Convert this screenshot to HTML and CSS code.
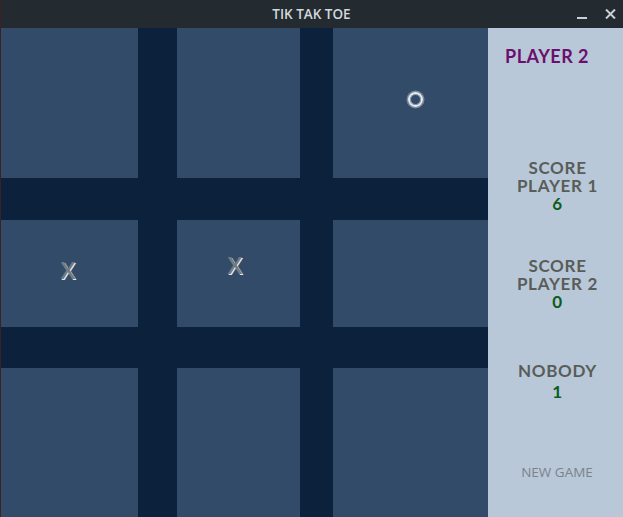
FILE: index.html
```html
<!DOCTYPE html>
<html>
<head>
<meta charset="utf-8">
<link rel="stylesheet" href="styles.css">
</head>
<body>
<div class="window">
  <header class="titlebar">
    <span class="spacer"></span>
    <span class="title">TIK TAK TOE</span>
    <span class="controls">
      <span class="minimize"></span>
      <svg class="close" width="11" height="10" viewBox="0 0 11 10"><path d="M1 0.5 L10 9.5 M10 0.5 L1 9.5" stroke="#c9d0d4" stroke-width="2" fill="none"/></svg>
    </span>
  </header>
  <main class="main">
    <div class="board">
      <div class="cell c1 r1"></div>
      <div class="cell c2 r1"></div>
      <div class="cell c3 r1"><span class="o"></span></div>
      <div class="cell c1 r2"><span class="x">X</span></div>
      <div class="cell c2 r2"><span class="x x-up">X</span></div>
      <div class="cell c3 r2"></div>
      <div class="cell c1 r3"></div>
      <div class="cell c2 r3"></div>
      <div class="cell c3 r3"></div>
    </div>
    <aside class="sidebar">
      <div class="turn">PLAYER 2</div>
      <div class="score s1">
        <div class="label">SCORE</div>
        <div class="label">PLAYER 1</div>
        <div class="value">6</div>
      </div>
      <div class="score s2">
        <div class="label">SCORE</div>
        <div class="label">PLAYER 2</div>
        <div class="value">0</div>
      </div>
      <div class="score s3">
        <div class="label">NOBODY</div>
        <div class="value nobody-value">1</div>
      </div>
      <div class="newgame">NEW GAME</div>
    </aside>
  </main>
</div>
</body>
</html>
```
FILE: styles.css
```css
html, body {
  margin: 0;
  padding: 0;
}
body {
  width: 623px;
  height: 517px;
  overflow: hidden;
  background: #232b31;
}
.window {
  width: 622px;
  height: 517px;
  border-left: 1px solid #3e1f26;
  display: flex;
  flex-direction: column;
}
.titlebar {
  height: 28px;
  background: #232b31;
  display: grid;
  grid-template-columns: 1fr auto 1fr;
  align-items: center;
}
.title {
  font-family: "Open Sans", sans-serif;
  font-weight: 600;
  font-size: 13.5px;
  color: #d3d9dc;
  padding-right: 1px;
}
.controls {
  display: flex;
  justify-content: flex-end;
  align-items: center;
  padding-right: 7px;
  height: 28px;
}
.minimize {
  width: 10px;
  height: 2px;
  background: #c9d0d4;
  margin-top: 8px;
  margin-right: 18px;
}
.close {
  display: block;
}
.main {
  flex: 1;
  display: flex;
}
.board {
  width: 487px;
  background: #0c213b;
  display: grid;
  grid-template-columns: 137px 39px 123px 33px 155px;
  grid-template-rows: 150px 42px 107px 41px 149px;
}
.cell {
  background: #324b68;
  display: flex;
  align-items: center;
  justify-content: center;
}
.c1 { grid-column: 1; }
.c2 { grid-column: 3; }
.c3 { grid-column: 5; }
.r1 { grid-row: 1; }
.r2 { grid-row: 3; }
.r3 { grid-row: 5; }
.o {
  width: 11px;
  height: 11px;
  border-radius: 50%;
  border: 2.5px solid #e6ecf2;
  box-shadow: 0 0 0 1.5px #7d8a97, inset 0 0 0 1px #8a98a8;
  margin-left: 9px;
  margin-top: -7px;
}
.x {
  font-family: "Open Sans", sans-serif;
  font-weight: 600;
  font-size: 24px;
  line-height: 24px;
  color: #737a80;
  text-shadow: 1px 1px 0 #e4ecf4;
  margin-top: -8px;
  margin-left: -3px;
}
.x-up {
  margin-top: -18px;
  margin-left: -7px;
}
.sidebar {
  flex: 1;
  background: #b9c8d8;
  display: flex;
  flex-direction: column;
  font-family: "Lato", sans-serif;
  font-weight: 700;
}
.turn {
  color: #6b0f6e;
  font-size: 18px;
  line-height: 22px;
  letter-spacing: 0.5px;
  padding-left: 17px;
  margin-top: 17px;
}
.score {
  text-align: center;
  color: #585d59;
  font-size: 17px;
  line-height: 18px;
  letter-spacing: 0.7px;
  padding-left: 4px;
}
.s1 { margin-top: 92px; }
.s2 { margin-top: 44px; }
.s3 { margin-top: 51px; }
.value {
  color: #0c5c1e;
}
.nobody-value {
  margin-top: 3px;
}
.newgame {
  margin-top: 62px;
  text-align: center;
  font-family: "Open Sans", sans-serif;
  font-weight: 400;
  font-size: 13.5px;
  color: #7b828b;
  padding-left: 3px;
}
```
